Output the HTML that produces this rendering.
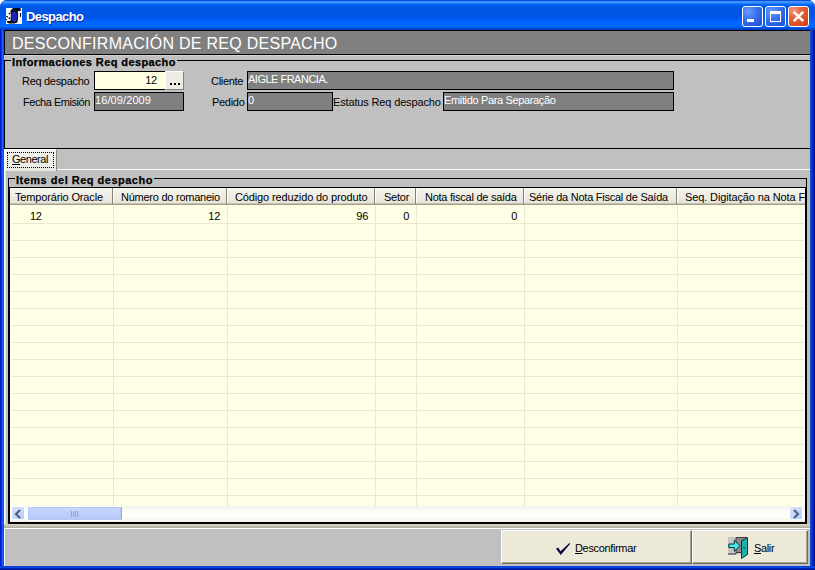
<!DOCTYPE html>
<html><head><meta charset="utf-8">
<style>
*{margin:0;padding:0;box-sizing:border-box}
html,body{width:815px;height:570px;overflow:hidden;background:#fff}
body{position:relative;font-family:"Liberation Sans",sans-serif;font-size:11px;color:#000}
.a{position:absolute}
.t{position:absolute;white-space:nowrap;line-height:13px;letter-spacing:-0.3px}
</style></head><body>
<div class="a" style="left:0;top:0;width:815px;height:570px;background:#0831D9;border-radius:7px 7px 0 0;overflow:hidden"><div class="a" style="left:0;top:0;width:815px;height:30px;background:linear-gradient(180deg,#0A4ED8 0px,#0A4ED8 1px,#3D95FF 1px,#3A90FF 3px,#0A66F5 4px,#005CEC 6px,#0055E5 9px,#0055E5 17px,#005AF4 19px,#0062FF 21px,#0068FF 24px,#0066FF 27px,#0050E0 28px,#0038B8 30px)"></div><div class="a" style="left:0;top:30px;width:4px;height:540px;background:linear-gradient(90deg,#0018C8 0,#0018C8 1px,#0838E0 1px,#0838E0 2px,#1860FF 2px,#1860FF 3px,#0A50E4 3px)"></div><div class="a" style="left:810px;top:30px;width:5px;height:540px;background:linear-gradient(90deg,#1848C8 0,#1848C8 1px,#0840D4 1px,#0840D4 2px,#0030C0 2px,#0030C0 3px,#0020B0 3px,#0020B0 4px,#0010A0 4px)"></div><div class="a" style="left:0;top:566px;width:815px;height:4px;background:linear-gradient(180deg,#0840D8 0,#0840D8 1px,#0A48E8 1px,#0A48E8 2px,#0028B8 2px,#0028B8 3px,#0010A0 3px)"></div></div>
<div class="a" style="left:6px;top:8px;width:16px;height:16px;background:#F2F8F6"><svg width="16" height="16" viewBox="0 0 16 16" style="position:absolute;left:0;top:0"><path d="M4.2 3.2 L7 0 L14.4 0 Q15 1.4 14.6 2.9 L11.6 2.9 Q12.3 5.5 12.1 9 Q12 13 11.2 14.6 L8.5 15.5 L3.2 15.5 Q1 15.2 0.9 13 L3 13 Q4.6 13.2 4.8 11.8 L4.8 4.5 Z" fill="#020218"/><ellipse cx="8.2" cy="8.6" rx="3" ry="5.4" fill="#2424B0"/><rect x="2.7" y="4.8" width="1.5" height="1.5" fill="#000"/><rect x="2.7" y="9.4" width="1.6" height="1.6" fill="#000"/><rect x="0.3" y="8" width="1.6" height="1.2" fill="#000"/><rect x="0" y="11" width="0.9" height="1.2" fill="#000"/><rect x="14" y="5" width="1" height="3.8" fill="#000"/></svg></div>
<div class="t" style="left:26px;top:8px;font-size:13px;font-weight:bold;color:#fff;letter-spacing:-0.6px;line-height:17px;text-shadow:1px 1px 0 #0A249F">Despacho</div>
<div class="a" style="left:742px;top:6px;width:21px;height:21px;border:1px solid #fff;border-radius:3px;background:radial-gradient(circle at 30% 25%,#6A9BFA 0,#3C74EE 40%,#2358DC 80%,#1D4FD0);overflow:hidden"><div class="a" style="left:4px;top:12px;width:7px;height:3px;background:#fff"></div></div>
<div class="a" style="left:765px;top:6px;width:21px;height:21px;border:1px solid #fff;border-radius:3px;background:radial-gradient(circle at 30% 25%,#6A9BFA 0,#3C74EE 40%,#2358DC 80%,#1D4FD0);overflow:hidden"><div class="a" style="left:4px;top:4px;width:11px;height:11px;border:1px solid #fff;border-top-width:3px"></div></div>
<div class="a" style="left:788px;top:6px;width:21px;height:21px;border:1px solid #fff;border-radius:3px;background:radial-gradient(circle at 25% 20%,#F49A7C 0,#E8643A 35%,#DC4E24 70%,#C23C14);overflow:hidden"><svg class="a" style="left:3px;top:3px" width="13" height="13" viewBox="0 0 13 13"><path d="M1.8 1.8L11.2 11.2M11.2 1.8L1.8 11.2" stroke="#fff" stroke-width="2.5"/></svg></div>
<div class="a" style="left:4px;top:30px;width:806px;height:536px;background:#C0C0C0"></div>
<div class="a" style="left:4px;top:30px;width:806px;height:25px;background:#808080;border:1px solid #000;border-right:0"></div>
<div class="t" style="left:12px;top:35px;font-size:16px;color:#fff;letter-spacing:0.27px;line-height:18px">DESCONFIRMACIÓN DE REQ DESPACHO</div>
<div class="a" style="left:5px;top:55px;width:805px;height:1px;background:#D4D4D4"></div>
<div class="a" style="left:4px;top:60px;width:806px;height:89px;border:1px solid #000;border-right:0"></div>
<div class="t" style="left:11px;top:56px;font-weight:bold;background:#C0C0C0;padding:0 1px;letter-spacing:0.4px;-webkit-text-stroke:0.25px #000">Informaciones Req despacho</div>
<div class="t" style="left:22px;top:75px;">Req despacho</div>
<div class="a" style="left:94px;top:71px;width:72px;height:19px;background:#FFFFE1;border:1px solid #000;border-right:0"></div>
<div class="t" style="left:94px;top:74px;width:63px;text-align:right;letter-spacing:-0.2px">12</div>
<div class="a" style="left:165px;top:71px;width:19px;height:19px;background:#ECEBE4;border:1px solid;border-color:#fff #808080 #808080 #fff"></div>
<div class="a" style="left:170px;top:83px;width:2px;height:2px;background:#000"></div>
<div class="a" style="left:174px;top:83px;width:2px;height:2px;background:#000"></div>
<div class="a" style="left:178px;top:83px;width:2px;height:2px;background:#000"></div>
<div class="t" style="left:23px;top:96px;letter-spacing:-0.45px">Fecha Emisión</div>
<div class="a" style="left:94px;top:92px;width:90px;height:19px;background:#808080;border:1px solid #000"></div>
<div class="t" style="left:95px;top:94px;color:#fff;letter-spacing:0.1px">16/09/2009</div>
<div class="t" style="left:211px;top:75px;">Cliente</div>
<div class="a" style="left:247px;top:71px;width:427px;height:19px;background:#808080;border:1px solid #000"></div>
<div class="t" style="left:248px;top:73px;color:#fff;letter-spacing:-0.5px">AIGLE FRANCIA.</div>
<div class="t" style="left:212px;top:96px;">Pedido</div>
<div class="a" style="left:247px;top:92px;width:86px;height:19px;background:#808080;border:1px solid #000"></div>
<div class="t" style="left:248px;top:94px;color:#fff">0</div>
<div class="t" style="left:333px;top:96px;letter-spacing:-0.15px">Estatus Req despacho</div>
<div class="a" style="left:443px;top:92px;width:231px;height:19px;background:#808080;border:1px solid #000"></div>
<div class="t" style="left:444px;top:94px;color:#fff;letter-spacing:-0.35px">Emitido Para Separação</div>
<div class="a" style="left:4px;top:149px;width:53px;height:22px;background:linear-gradient(180deg,#F3F2EC,#EBEAE2);border-left:2px solid #fff;border-top:1px solid #fff;border-right:1px solid #8C8A80"></div>
<div class="a" style="left:7px;top:152px;width:47px;height:16px;border:1px dotted #000"></div>
<div class="t" style="left:12px;top:153px;letter-spacing:-0.45px"><u style="text-decoration-skip-ink:none">G</u>eneral</div>
<div class="a" style="left:57px;top:169px;width:753px;height:1px;background:#fff"></div>
<div class="a" style="left:4px;top:170px;width:1px;height:358px;background:#fff"></div>
<div class="a" style="left:5px;top:170px;width:1px;height:358px;background:#E6E3D6"></div>
<div class="a" style="left:8px;top:178px;width:799px;height:346px;border:1px solid #000"></div>
<div class="t" style="left:15px;top:174px;font-weight:bold;background:#C0C0C0;padding:0 1px;letter-spacing:0.5px;-webkit-text-stroke:0.25px #000">Items del Req despacho</div>
<div class="a" style="left:9px;top:187px;width:797px;height:336px;border:1px solid #000;background:#FFFFE6;overflow:hidden"><div class="a" style="left:0px;top:0px;width:795px;height:15px;background:linear-gradient(180deg,#F6F5EE,#EEEDE4 60%,#E6E4D8)"></div><div class="a" style="left:0px;top:15px;width:795px;height:1px;background:#C8C4B4"></div><div class="a" style="left:0px;top:16px;width:795px;height:1px;background:#A29E8A"></div><div class="a" style="left:102px;top:0px;width:1px;height:16px;background:#85826F"></div><div class="a" style="left:103px;top:0px;width:1px;height:15px;background:#FFFFFF"></div><div class="a" style="left:216px;top:0px;width:1px;height:16px;background:#85826F"></div><div class="a" style="left:217px;top:0px;width:1px;height:15px;background:#FFFFFF"></div><div class="a" style="left:364px;top:0px;width:1px;height:16px;background:#85826F"></div><div class="a" style="left:365px;top:0px;width:1px;height:15px;background:#FFFFFF"></div><div class="a" style="left:405px;top:0px;width:1px;height:16px;background:#85826F"></div><div class="a" style="left:406px;top:0px;width:1px;height:15px;background:#FFFFFF"></div><div class="a" style="left:513px;top:0px;width:1px;height:16px;background:#85826F"></div><div class="a" style="left:514px;top:0px;width:1px;height:15px;background:#FFFFFF"></div><div class="a" style="left:666px;top:0px;width:1px;height:16px;background:#85826F"></div><div class="a" style="left:667px;top:0px;width:1px;height:15px;background:#FFFFFF"></div><div class="t" style="left:5px;top:3px;letter-spacing:-0.15px">Temporário Oracle</div><div class="t" style="left:111px;top:3px;letter-spacing:-0.25px">Número do romaneio</div><div class="t" style="left:225px;top:3px;letter-spacing:-0.13px">Código reduzido do produto</div><div class="t" style="left:374px;top:3px;letter-spacing:-0.25px">Setor</div><div class="t" style="left:415px;top:3px;letter-spacing:-0.25px">Nota fiscal de saída</div><div class="t" style="left:519px;top:3px;letter-spacing:-0.25px">Série da Nota Fiscal de Saída</div><div class="t" style="left:675px;top:3px;letter-spacing:-0.12px">Seq. Digitação na Nota Fiscal</div><div class="a" style="left:0px;top:35px;width:795px;height:1px;background:#EAE9CF"></div><div class="a" style="left:0px;top:52px;width:795px;height:1px;background:#EAE9CF"></div><div class="a" style="left:0px;top:69px;width:795px;height:1px;background:#EAE9CF"></div><div class="a" style="left:0px;top:86px;width:795px;height:1px;background:#EAE9CF"></div><div class="a" style="left:0px;top:103px;width:795px;height:1px;background:#EAE9CF"></div><div class="a" style="left:0px;top:120px;width:795px;height:1px;background:#EAE9CF"></div><div class="a" style="left:0px;top:137px;width:795px;height:1px;background:#EAE9CF"></div><div class="a" style="left:0px;top:154px;width:795px;height:1px;background:#EAE9CF"></div><div class="a" style="left:0px;top:171px;width:795px;height:1px;background:#EAE9CF"></div><div class="a" style="left:0px;top:188px;width:795px;height:1px;background:#EAE9CF"></div><div class="a" style="left:0px;top:205px;width:795px;height:1px;background:#EAE9CF"></div><div class="a" style="left:0px;top:222px;width:795px;height:1px;background:#EAE9CF"></div><div class="a" style="left:0px;top:239px;width:795px;height:1px;background:#EAE9CF"></div><div class="a" style="left:0px;top:256px;width:795px;height:1px;background:#EAE9CF"></div><div class="a" style="left:0px;top:273px;width:795px;height:1px;background:#EAE9CF"></div><div class="a" style="left:0px;top:290px;width:795px;height:1px;background:#EAE9CF"></div><div class="a" style="left:0px;top:307px;width:795px;height:1px;background:#EAE9CF"></div><div class="a" style="left:103px;top:17px;width:1px;height:301px;background:#EAE9CF"></div><div class="a" style="left:217px;top:17px;width:1px;height:301px;background:#EAE9CF"></div><div class="a" style="left:365px;top:17px;width:1px;height:301px;background:#EAE9CF"></div><div class="a" style="left:406px;top:17px;width:1px;height:301px;background:#EAE9CF"></div><div class="a" style="left:514px;top:17px;width:1px;height:301px;background:#EAE9CF"></div><div class="a" style="left:667px;top:17px;width:1px;height:301px;background:#EAE9CF"></div><div class="a" style="left:0px;top:17px;width:1px;height:301px;background:#FFFFFF"></div><div class="a" style="left:794px;top:17px;width:1px;height:301px;background:#FFFFFF"></div><div class="t" style="left:20px;top:22px;">12</div><div class="t" style="left:170px;top:22px;"><span style="display:inline-block;width:40px;text-align:right">12</span></div><div class="t" style="left:318px;top:22px;"><span style="display:inline-block;width:40px;text-align:right">96</span></div><div class="t" style="left:359px;top:22px;"><span style="display:inline-block;width:40px;text-align:right">0</span></div><div class="t" style="left:467px;top:22px;"><span style="display:inline-block;width:40px;text-align:right">0</span></div><div class="a" style="left:0px;top:318px;width:795px;height:16px;background:linear-gradient(180deg,#F3F1EC,#FEFEFB 40%,#FEFEFB 70%,#F0EEE6)"></div><div class="a" style="left:1px;top:318px;width:14px;height:14px;background:linear-gradient(135deg,#D8E4FC,#B9CDFA);border:1px solid #fff;border-radius:2px"></div><svg class="a" style="left:4px;top:321px" width="8" height="10" viewBox="0 0 8 10"><path d="M6 1 L2 5 L6 9" fill="none" stroke="#4D6185" stroke-width="2.2"/></svg><div class="a" style="left:779px;top:318px;width:14px;height:14px;background:linear-gradient(135deg,#D8E4FC,#B9CDFA);border:1px solid #fff;border-radius:2px"></div><svg class="a" style="left:782px;top:321px" width="8" height="10" viewBox="0 0 8 10"><path d="M2 1 L6 5 L2 9" fill="none" stroke="#4D6185" stroke-width="2.2"/></svg><div class="a" style="left:17px;top:318px;width:95px;height:15px;background:linear-gradient(180deg,#C9D8FC,#BED0FA 50%,#B2C7F8);border:1px solid #fff;border-radius:2px;box-shadow:inset 0 0 0 1px #B4C8F6"></div><div class="a" style="left:61px;top:323px;width:1px;height:6px;background:#8EA4DC"></div><div class="a" style="left:63px;top:323px;width:1px;height:6px;background:#8EA4DC"></div><div class="a" style="left:65px;top:323px;width:1px;height:6px;background:#8EA4DC"></div><div class="a" style="left:67px;top:323px;width:1px;height:6px;background:#8EA4DC"></div><div class="a" style="left:111px;top:319px;width:1px;height:13px;background:#98A8D4"></div></div>
<div class="a" style="left:4px;top:524px;width:806px;height:4px;background:linear-gradient(180deg,#D8D5C8,#BFBCAE 70%,#A9A698)"></div>
<div class="a" style="left:4px;top:528px;width:806px;height:1px;background:#fff"></div>
<div class="a" style="left:4px;top:528px;width:1px;height:38px;background:#fff"></div>
<div class="a" style="left:501px;top:530px;width:191px;height:34px;background:#ECE9D8;border:1px solid;border-color:#fff #6F6A60 #6F6A60 #fff;box-shadow:inset -1px -1px 0 #A8A496"></div>
<svg class="a" style="left:555px;top:542px" width="16" height="14" viewBox="0 0 16 14"><path d="M1 6.8 L3.2 5.6 L5.6 9.2 L14.4 1 L15.2 1.8 L5.8 13 Z" fill="#0A0A48"/></svg>
<div class="t" style="left:575px;top:542px;letter-spacing:-0.35px"><u>D</u>esconfirmar</div>
<div class="a" style="left:692px;top:530px;width:116px;height:34px;background:#ECE9D8;border:1px solid;border-color:#fff #6F6A60 #6F6A60 #fff;box-shadow:inset -1px -1px 0 #A8A496"></div>
<svg class="a" style="left:727px;top:537px" width="23" height="23" viewBox="0 0 23 23"><rect x="1" y="0" width="20" height="17.5" fill="#C6C6C6"/><path d="M9 15.5 L9 0.5 L20 0.5 L20 15.5Z" fill="#8C8888" stroke="#4A3A3A" stroke-width="1"/><path d="M1 17 L9 17 L9 15.5" fill="none" stroke="#3A3030" stroke-width="1"/><path d="M14.5 3.8 L20.5 0.8 L20.5 17.5 L14.5 21.5Z" fill="#1FB0AC" stroke="#003C3C" stroke-width="1"/><rect x="16.5" y="10" width="1.2" height="1.5" fill="#003C3C"/><path d="M1.8 7 L7.3 7 L7.3 3.2 L13 8.8 L7.3 14.3 L7.3 10.6 L1.8 10.6Z" fill="#4AE6E8" stroke="#003838" stroke-width="1"/></svg>
<div class="t" style="left:754px;top:542px;letter-spacing:-0.35px"><u>S</u>alir</div>
</body></html>
